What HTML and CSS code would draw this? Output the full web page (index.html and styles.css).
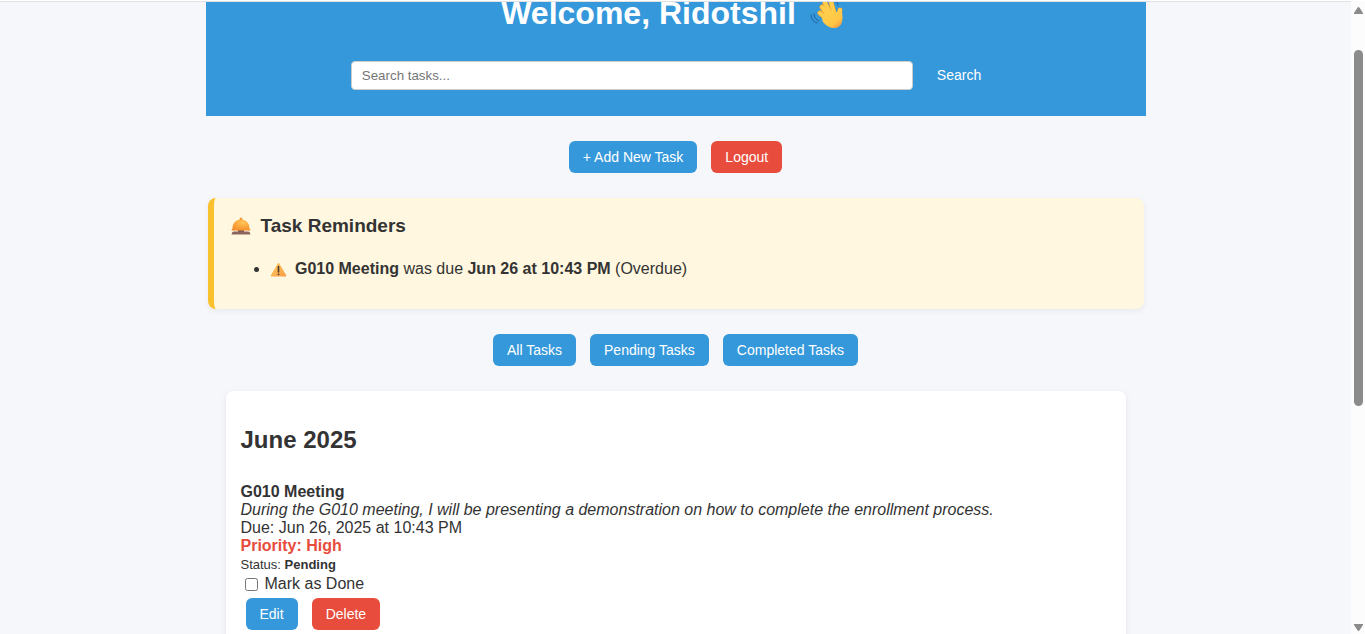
FILE: index.html
```html
<!DOCTYPE html>
<html lang="en">
<head>
<meta charset="utf-8">
<title>Task Manager</title>
<link rel="stylesheet" href="styles.css">
</head>
<body>
<div class="content">
  <header class="header">
    <h1 class="title">Welcome, Ridotshil
      <svg class="wave" viewBox="0 0 34 34" aria-hidden="true">
        <defs>
          <linearGradient id="skin" x1="0" y1="0" x2="1" y2="1"><stop offset="0" stop-color="#ffd34e"/><stop offset=".65" stop-color="#ffc544"/><stop offset="1" stop-color="#f08a45"/></linearGradient>
        </defs>
        <g fill="none" stroke="#245f9b" stroke-width="1" stroke-linecap="round"><path d="M4 18q0 5 5 7M1 19q0 6 6 8M24 5q4 1 4 4"/></g>
        <g stroke="#e99a35" stroke-width="5" stroke-linecap="round"><path d="M12 11l8 11M15 7l7 14M21 6l4 14M10 17l8 7M30 14l-2 10"/></g>
        <g stroke="#ffcd4b" stroke-width="4" stroke-linecap="round"><path d="M12 11l8 11M15 7l7 14M21 6l4 14M10 17l8 7M30 14l-2 10"/></g>
        <path d="M14 19q6-5 12-3l6 0q1 6 0 10-2 6-8 6-6 0-11-6-2-4 1-7z" fill="url(#skin)"/>
      </svg>
    </h1>
    <form class="search">
      <input class="search-input" type="text" placeholder="Search tasks..." aria-label="Search tasks">
      <button class="btn" type="button">Search</button>
    </form>
  </header>

  <nav class="actions">
    <a class="btn" href="#">+ Add New Task</a>
    <a class="btn btn-danger" href="#">Logout</a>
  </nav>

  <section class="reminders">
    <h3 class="reminders-title">
      <svg class="bell" viewBox="0 0 20 18" aria-hidden="true">
        <defs>
          <radialGradient id="dome" cx=".6" cy=".3" r=".8"><stop offset="0" stop-color="#ffc65a"/><stop offset=".5" stop-color="#fba53a"/><stop offset="1" stop-color="#f08a2c"/></radialGradient>
        </defs>
        <path d="M7 13h6v2H7z" fill="#7a524c"/>
        <path d="M2.500 14.500h15q1.500 0 2 3H.5Q1 14.500 2.500 14.500z" fill="#8d6560"/>
        <circle cx="10" cy="2" r="1.500" fill="#ef9a3a"/>
        <path d="M1.500 11.500C1.500 6 5 2.500 10 2.500s8.500 3.500 8.500 9l1.300 2H.2z" fill="url(#dome)"/>
      </svg>
      Task Reminders
    </h3>
    <ul class="reminders-list">
      <li>
        <svg class="warn" viewBox="0 0 17 15" aria-hidden="true">
          <defs><linearGradient id="amber" x1="0" y1="0" x2="1" y2="1"><stop offset="0" stop-color="#ffcf55"/><stop offset="1" stop-color="#fb9a48"/></linearGradient></defs>
          <path d="M8.500 1L16 14H1z" fill="url(#amber)" stroke="url(#amber)" stroke-linejoin="round"/>
          <path d="M8.500 4.500v5.500" stroke="#4b3b32" stroke-width="1.600" stroke-linecap="round"/><circle cx="8.500" cy="12.300" r=".9" fill="#4b3b32"/>
        </svg>
        <strong>G010 Meeting</strong> was due <strong>Jun 26 at 10:43 PM</strong> (Overdue)
      </li>
    </ul>
  </section>

  <nav class="actions">
    <a class="btn" href="#">All Tasks</a>
    <a class="btn" href="#">Pending Tasks</a>
    <a class="btn" href="#">Completed Tasks</a>
  </nav>

  <main class="card">
    <h2 class="month">June 2025</h2>
    <article class="task">
      <strong>G010 Meeting</strong>
      <em>During the G010 meeting, I will be presenting a demonstration on how to complete the enrollment process.</em>
      <span>Due: Jun 26, 2025 at 10:43 PM</span>
      <strong class="priority">Priority: High</strong>
      <small class="status">Status: <b>Pending</b></small>
      <label class="done"><input class="check" type="checkbox">Mark as Done</label>
      <div class="task-actions">
        <a class="btn" href="#">Edit</a>
        <a class="btn btn-danger" href="#">Delete</a>
      </div>
    </article>
  </main>
</div>
<div class="scrollbar" aria-hidden="true">
  <svg class="arrow" viewBox="0 0 9 7"><path d="M4.500 0Q5.200 0 5.700 1L9 6v1H0V6L3.300 1Q3.800 0 4.500 0z" fill="#8b8b8b"/></svg>
  <div class="track"><div class="thumb"></div></div>
  <svg class="arrow" viewBox="0 0 9 7"><path d="M4.500 7Q5.200 7 5.700 6L9 1V0H0V1L3.300 6Q3.800 7 4.500 7z" fill="#8b8b8b"/></svg>
</div>
</body>
</html>
```
FILE: styles.css
```css
* {
  box-sizing: border-box;
}

body {
  margin: 0;
  height: 100vh;
  padding-top: 1px;
  display: flex;
  overflow: hidden;
  background: #fff;
  color: #333;
  font: 16px/18px "Liberation Sans", Arial, sans-serif;
}

.content {
  flex: 1;
  height: 100%;
  overflow: hidden;
  display: flex;
  flex-direction: column;
  align-items: center;
  border-top: 1px solid #dfe1e3;
  background: #f5f7fb;
}

.content > * {
  flex-shrink: 0;
}

.header {
  width: 100%;
  max-width: 940px;
  padding: 0 5px 26px 0;
  overflow: hidden;
  background: #3498db;
  color: #fff;
}

.title {
  display: flex;
  justify-content: center;
  gap: 13px;
  height: 22px;
  margin: 0 0 36px;
  font-size: 32px;
  line-height: 22px;
}

.wave {
  width: 36px;
  height: 34px;
  margin-top: -6px;
}

.search {
  display: flex;
  justify-content: center;
  align-items: center;
  gap: 10px;
}

.search-input {
  width: 562px;
  height: 29px;
  padding: 0 10px;
  border: 1px solid #ccc;
  border-radius: 4px;
  font-family: inherit;
}

.search-input::placeholder {
  color: #757575;
}

.btn {
  padding: 8px 14px;
  border: 0;
  border-radius: 6px;
  background: #3498db;
  color: #fff;
  font: 14px/16px "Liberation Sans", Arial, sans-serif;
  text-decoration: none;
  white-space: nowrap;
}

.btn-danger {
  background: #e74c3c;
}

.actions {
  display: flex;
  gap: 14px;
  margin: 25px 0;
}

.search .btn {
  padding: 7px 14px;
}

.reminders {
  width: 100%;
  max-width: 936px;
  padding: 19px 16px 31px 17px;
  border-left: 6px solid #fbc02d;
  border-radius: 8px;
  background: #fff7df;
  box-shadow: 0 2px 6px rgba(0, 0, 0, 0.06);
}

.reminders-title {
  display: flex;
  align-items: center;
  gap: 10px;
  margin: 0 0 25px;
  font-size: 19px;
  line-height: 18px;
}

.bell {
  width: 20px;
  height: 18px;
}

.reminders-list {
  margin: 0;
  padding-left: 39px;
}

.warn {
  width: 17px;
  height: 15px;
  margin-right: 4px;
  vertical-align: -3px;
}

.card {
  width: 100%;
  max-width: 900px;
  padding: 35px 15px 20px;
  border-radius: 8px;
  background: #fff;
  box-shadow: 0 2px 6px rgba(0, 0, 0, 0.08);
}

.month {
  margin: 0 0 29px;
  font-size: 24px;
  line-height: 28px;
}

.task {
  display: flex;
  flex-direction: column;
}

.priority {
  color: #e74c3c;
}

.status {
  font-size: 13px;
  line-height: 20px;
}

.done {
  display: flex;
  align-items: center;
}

.check {
  width: 13px;
  height: 13px;
  margin: 0 7px 0 4px;
}

.task-actions {
  display: flex;
  gap: 14px;
  margin: 5px 5px 0;
}

.scrollbar {
  flex: 0 0 14px;
  display: flex;
  flex-direction: column;
  align-items: center;
  padding: 6px 0 3px;
  background: #fcfcfc;
}

.arrow {
  width: 9px;
  height: 7px;
}

.track {
  flex: 1;
  padding-top: 36px;
}

.thumb {
  width: 9px;
  height: 62%;
  border-radius: 5px;
  background: #8b8b8b;
}
```
